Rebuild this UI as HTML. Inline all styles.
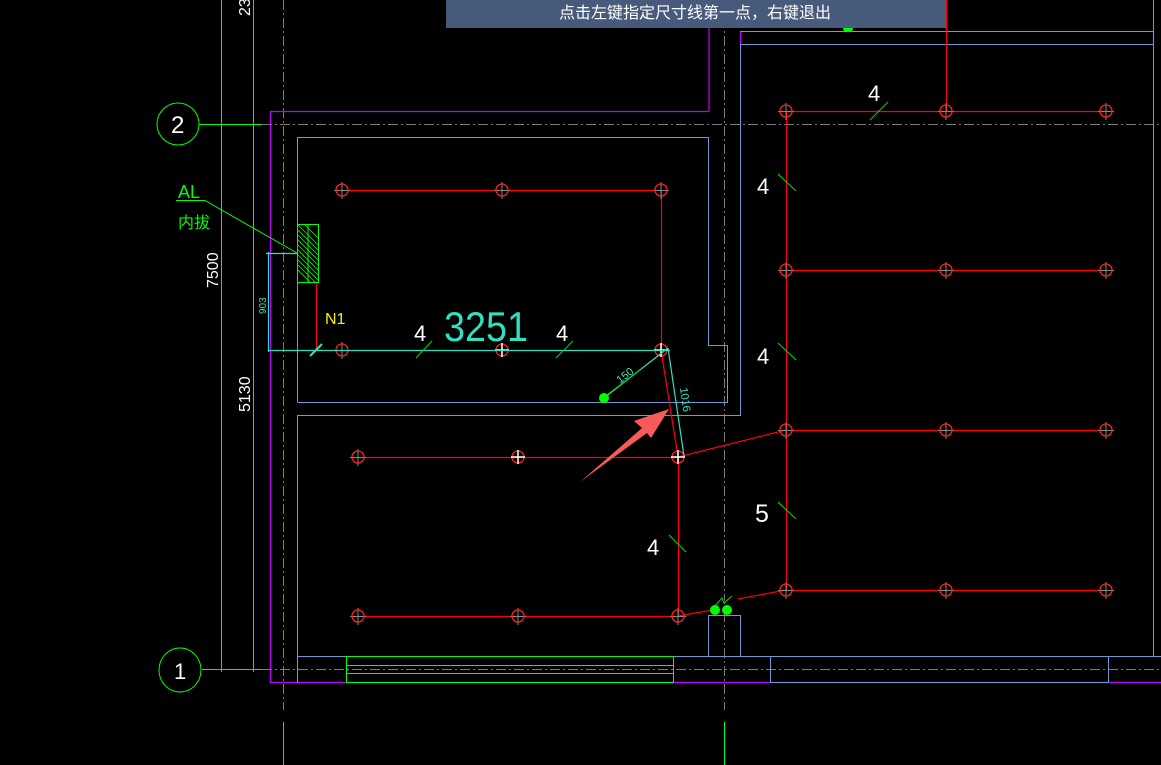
<!DOCTYPE html>
<html><head><meta charset="utf-8"><style>
html,body{margin:0;padding:0;background:#000;width:1161px;height:765px;overflow:hidden}
svg{display:block}
text{font-family:"Liberation Sans","Noto Sans CJK SC",sans-serif}
</style></head><body>
<svg width="1161" height="765" viewBox="0 0 1161 765" xmlns="http://www.w3.org/2000/svg">
<rect width="1161" height="765" fill="#000"/>
<g stroke="#7a7a7a" stroke-width="1" stroke-dasharray="10,3,2,3" fill="none">
<line x1="262" y1="124.5" x2="1161" y2="124.5"/>
<line x1="262" y1="669.5" x2="1161" y2="669.5"/>
<line x1="283.5" y1="0" x2="283.5" y2="710"/>
<line x1="724.5" y1="0" x2="724.5" y2="710"/>
</g>
<!-- magenta -->
<g stroke="#c000ff" stroke-width="1.2" fill="none">
<polyline points="709,0 709,111.5 270.5,111.5 270.5,682.5 1161,682.5"/>
<line x1="740.5" y1="31" x2="740.5" y2="44"/>
<line x1="1153.5" y1="31" x2="1153.5" y2="44"/>
</g>
<!-- blue walls -->
<g stroke="#6a9ad2" stroke-width="1" fill="none">
<polyline points="297.5,402.5 297.5,137.5 708.5,137.5 708.5,345.5 727.5,345.5 727.5,402.5 297.5,402.5"/>
<polyline points="297.5,683 297.5,415.5 740.5,415.5 740.5,44.5 1153.5,44.5"/>
<line x1="740" y1="31.5" x2="1153" y2="31.5"/>
<line x1="1153.5" y1="0" x2="1153.5" y2="656"/>
<line x1="297" y1="656.5" x2="1161" y2="656.5"/>
<rect x="770.5" y="656.5" width="338" height="26"/>
<rect x="708.5" y="615.5" width="32" height="41"/>
</g>
<g stroke="#00ff00" stroke-width="1" fill="none">
<line x1="283.5" y1="722" x2="283.5" y2="765"/>
<line x1="724.5" y1="722" x2="724.5" y2="765"/>
<line x1="221.5" y1="0" x2="221.5" y2="672"/>
<line x1="253.5" y1="0" x2="253.5" y2="672"/>
<line x1="199" y1="124.5" x2="262" y2="124.5"/>
<line x1="202" y1="669.5" x2="262" y2="669.5"/>
<circle cx="178" cy="124" r="21"/>
<ellipse cx="180" cy="670" rx="21" ry="22"/>
<rect x="346.5" y="656.5" width="327" height="26"/>
<line x1="346" y1="665.5" x2="673" y2="665.5"/>
<line x1="346" y1="673.5" x2="673" y2="673.5"/>
<polyline points="176,200.5 205,200.5 297,253"/>
<rect x="297.5" y="224.5" width="21" height="58"/>
<line x1="308" y1="224" x2="308" y2="283"/>
</g>
<g stroke="#00ff00" stroke-width="0.8">
<line x1="298" y1="230" x2="318" y2="250"/><line x1="298" y1="240" x2="318" y2="260"/><line x1="298" y1="250" x2="318" y2="270"/><line x1="298" y1="260" x2="318" y2="280"/><line x1="298" y1="270" x2="311" y2="283"/><line x1="305" y1="225" x2="318" y2="238"/><line x1="298" y1="225" x2="318" y2="245"/><line x1="298" y1="235" x2="318" y2="255"/><line x1="298" y1="245" x2="318" y2="265"/><line x1="298" y1="255" x2="318" y2="275"/><line x1="298" y1="265" x2="316" y2="283"/>
</g>
<g stroke="#ff0000" stroke-width="1.2" fill="none">
<line x1="342" y1="190.5" x2="661" y2="190.5"/>
<line x1="661.5" y1="190" x2="661.5" y2="350"/>
<line x1="358" y1="457.5" x2="678" y2="457.5"/>
<line x1="358" y1="616.5" x2="678" y2="616.5"/>
<line x1="678.5" y1="457" x2="678.5" y2="616"/>
<line x1="678" y1="457" x2="786" y2="430"/>
<line x1="661" y1="350" x2="678" y2="457"/>
<line x1="786" y1="111.5" x2="1106" y2="111.5"/>
<line x1="946.5" y1="0" x2="946.5" y2="111"/>
<line x1="786.5" y1="111" x2="786.5" y2="590"/>
<line x1="786" y1="270.5" x2="1106" y2="270.5"/>
<line x1="786" y1="430.5" x2="1106" y2="430.5"/>
<line x1="786" y1="590.5" x2="1106" y2="590.5"/>
<polyline points="678,616 713,610"/>
<polyline points="738,599 786,590"/>
<line x1="316.5" y1="283" x2="316.5" y2="350"/>
</g>
<g fill="none">
<g stroke="#888" stroke-width="1">
<path d="M334 190.5h16M342 182v17M494 190.5h16M502 182v17M653 190.5h16M661 182v17M334 350.5h16M342 342v17M350 457.5h16M358 449v17M350 616.5h16M358 608v17M510 616.5h16M518 608v17M670 616.5h16M678 608v17M778 111.5h16M786 103v17M938 111.5h16M946 103v17M1098 111.5h16M1106 103v17M778 270.5h16M786 262v17M938 270.5h16M946 262v17M1098 270.5h16M1106 262v17M778 430.5h16M786 422v17M938 430.5h16M946 422v17M1098 430.5h16M1106 422v17M778 590.5h16M786 582v17M938 590.5h16M946 582v17M1098 590.5h16M1106 582v17"/>
</g>
<g stroke="#ff2020" stroke-width="1.3">
<circle cx="342" cy="190" r="6"/><circle cx="502" cy="190" r="6"/><circle cx="661" cy="190" r="6"/>
<circle cx="342" cy="350" r="6"/><circle cx="502" cy="350" r="6"/><circle cx="661" cy="350" r="6"/>
<circle cx="358" cy="457" r="6"/><circle cx="518" cy="457" r="6"/><circle cx="678" cy="457" r="6"/>
<circle cx="358" cy="616" r="6"/><circle cx="518" cy="616" r="6"/><circle cx="678" cy="616" r="6"/>
<circle cx="786" cy="111" r="6"/><circle cx="946" cy="111" r="6"/><circle cx="1106" cy="111" r="6"/>
<circle cx="786" cy="270" r="6"/><circle cx="946" cy="270" r="6"/><circle cx="1106" cy="270" r="6"/>
<circle cx="786" cy="430" r="6"/><circle cx="946" cy="430" r="6"/><circle cx="1106" cy="430" r="6"/>
<circle cx="786" cy="590" r="6"/><circle cx="946" cy="590" r="6"/><circle cx="1106" cy="590" r="6"/>
</g>
<g stroke="#fff" stroke-width="1.5">
<path d="M495 350h14M502 343v14M511 457h14M518 450v14M671 457h14M678 450v14M654 350h14M661 343v14"/>
</g>
</g>
<g stroke="#30e0c0" stroke-width="1.2" fill="none">
<line x1="268" y1="350.5" x2="670" y2="350.5"/>
<line x1="268.5" y1="252" x2="268.5" y2="352"/>
<line x1="266" y1="253.5" x2="297" y2="253.5"/>
<line x1="604" y1="398" x2="668" y2="348"/>
<line x1="668" y1="348" x2="684" y2="456"/>
<line x1="310" y1="356" x2="322" y2="344" stroke-width="2"/>
</g>
<g fill="#30e0c0">
<text x="0" y="0" font-size="10" transform="translate(266,314) rotate(-90)">903</text>
<text x="0" y="0" font-size="11" transform="translate(620,384) rotate(-38)">150</text>
<text x="0" y="0" font-size="11" transform="translate(680,388) rotate(82)">1016</text>
<text x="444" y="341" font-size="42" textLength="84" lengthAdjust="spacingAndGlyphs">3251</text>
</g>
<g stroke="#00e000" stroke-width="1">
<line x1="416" y1="358" x2="432" y2="341"/>
<line x1="556" y1="358" x2="573" y2="341"/>
<line x1="870" y1="120" x2="888" y2="102"/>
<line x1="778" y1="174" x2="796" y2="191"/>
<line x1="778" y1="343" x2="796" y2="360"/>
<line x1="778" y1="502" x2="796" y2="519"/>
<line x1="669" y1="535" x2="686" y2="552"/>
<line x1="603" y1="398" x2="640" y2="370"/>
<polyline points="713,608 722,598 724,603 732,596"/>
</g>
<g fill="#00ff00">
<circle cx="604" cy="398" r="5"/>
<ellipse cx="715" cy="610" rx="5" ry="5"/>
<ellipse cx="727" cy="610" rx="5" ry="5"/>
<ellipse cx="848" cy="29" rx="5" ry="3"/>
</g>
<g fill="#fff">
<text x="414" y="341" font-size="22">4</text>
<text x="556" y="341" font-size="22">4</text>
<text x="868" y="101" font-size="22">4</text>
<text x="757" y="194" font-size="22">4</text>
<text x="757" y="364" font-size="22">4</text>
<text x="755" y="522" font-size="25">5</text>
<text x="647" y="555" font-size="22">4</text>
<text x="171" y="133" font-size="24">2</text>
<text x="174" y="679" font-size="22">1</text>
<text x="0" y="0" font-size="16" transform="translate(218,288) rotate(-90)">7500</text>
<text x="0" y="0" font-size="16" transform="translate(250,412) rotate(-90)">5130</text>
<text x="0" y="0" font-size="16" transform="translate(250,16) rotate(-90)">23</text>
</g>
<text x="178" y="198" font-size="18" fill="#00ff00">AL</text>
<text x="178" y="228" font-size="16" fill="#00ff00">内拔</text>
<text x="325" y="324" font-size="16" fill="#ffee00">N1</text>
<polygon points="669,409 634,421 642,428 580,482 647,433 651,438" fill="#f85a5a"/>
<rect x="446" y="0" width="500" height="28" fill="#475a7b"/>
<text x="695" y="18" font-size="16" fill="#fff" text-anchor="middle" font-family="'Noto Sans CJK SC',sans-serif">点击左键指定尺寸线第一点，右键退出</text>
<line x1="946.5" y1="0" x2="946.5" y2="28" stroke="#ff0000" stroke-width="1.2"/>
</svg>
</body></html>
